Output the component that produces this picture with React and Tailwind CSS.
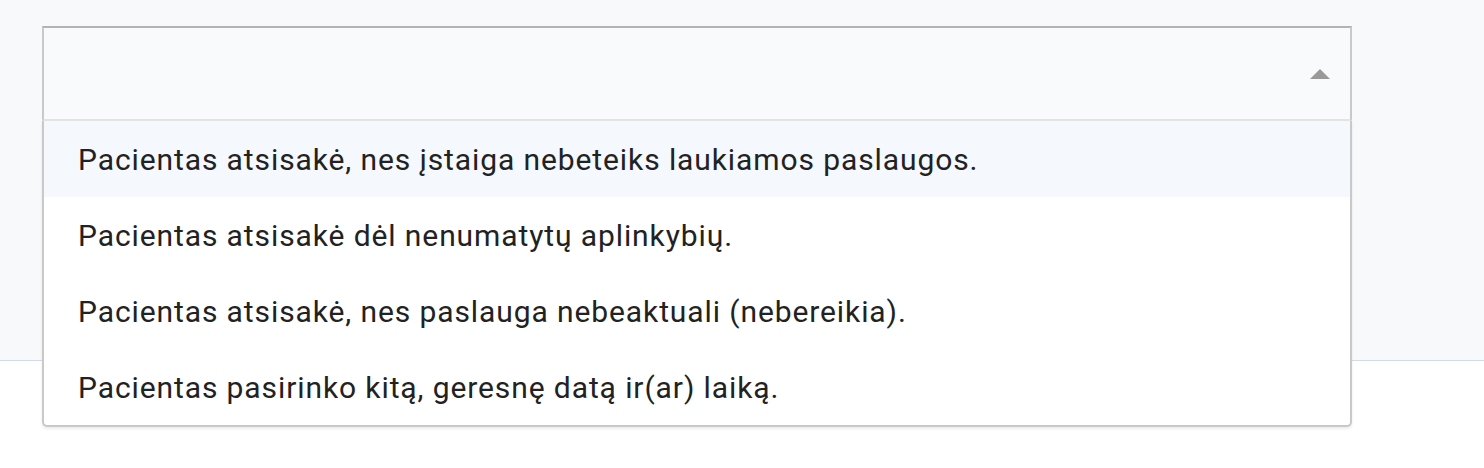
const OPTIONS = [
  'Pacientas atsisakė, nes įstaiga nebeteiks laukiamos paslaugos.',
  'Pacientas atsisakė dėl nenumatytų aplinkybių.',
  'Pacientas atsisakė, nes paslauga nebeaktuali (nebereikia).',
  'Pacientas pasirinko kitą, geresnę datą ir(ar) laiką.',
]

export default function App() {
  return (
    <div className="relative h-[468px] w-full bg-white font-['Roboto',sans-serif]">
      <div className="h-[361px] bg-[#f8f9fb] border-b border-[#d3dbe6]" />
      <div className="absolute left-[42px] top-[26px] w-[1310px]">
        <div className="h-[95px] bg-[#f9fafb] border-x-2 border-t-2 border-x-[#c9c9c9] border-t-[#b3b3b3] border-b-2 border-b-[#e3e3e3] flex items-center justify-end pr-[20px]">
          <svg width="20" height="10" viewBox="0 0 20 10">
            <polygon points="10,0 20,10 0,10" fill="#999999" />
          </svg>
        </div>
        <ul className="bg-white border-x-2 border-b-2 border-[#c9c9c9] rounded-b-[5px] shadow-[0_2px_3px_rgba(0,0,0,0.08)] overflow-hidden">
          {OPTIONS.map((o, i) => (
            <li
              key={o}
              className={`h-[76px] flex items-center pl-[34px] text-[30px] tracking-[0.9px] text-[#222222] ${i === 0 ? 'bg-[#f5f8fd]' : ''}`}
            >
              {o}
            </li>
          ))}
        </ul>
      </div>
    </div>
  )
}
